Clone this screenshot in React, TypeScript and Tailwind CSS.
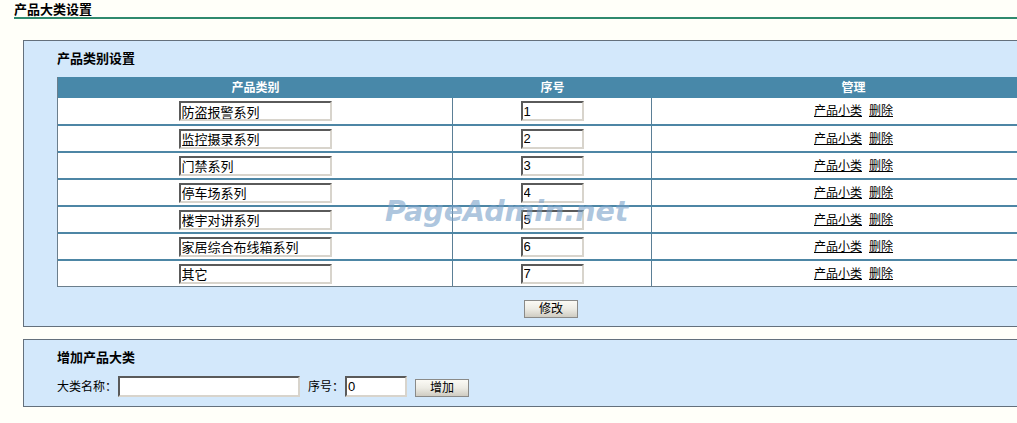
import React from 'react'

// product category rows
const categories = [
  { name: '防盗报警系列', order: '1' },
  { name: '监控摄录系列', order: '2' },
  { name: '门禁系列', order: '3' },
  { name: '停车场系列', order: '4' },
  { name: '楼宇对讲系列', order: '5' },
  { name: '家居综合布线箱系列', order: '6' },
  { name: '其它', order: '7' },
]

const font = { fontFamily: '"Liberation Sans", "Noto Sans CJK SC", sans-serif' }

const insetInput =
  'h-[20px] bg-white border-2 border-t-[#5a5a5a] border-l-[#5a5a5a] border-r-[#d8d4cc] border-b-[#d8d4cc] px-[1px] text-[13px] leading-none text-black outline-none'

const oldButton =
  'h-[18px] w-[54px] border border-[#8a8a88] bg-gradient-to-b from-[#fbfaf5] via-[#ecebe4] to-[#cfccc2] text-[12px] leading-none text-black'

export default function App() {
  return (
    <div className="h-[423px] w-full overflow-hidden bg-[#fffff9] text-black" style={font}>
      <div className="pl-[14px]">
        {/* page title */}
        <div className="h-[19px] border-b-2 border-[#2f8a6e] pt-[3px] text-[13px] font-bold leading-[14px]">
          产品大类设置
        </div>

        {/* category list panel */}
        <div className="mt-[21px] ml-[9px] w-[1070px] border border-[#64707c] bg-[#d3e8fb] pl-[33px]">
          <div className="flex h-[36px] items-center text-[13px] font-bold">产品类别设置</div>

          <div className="relative w-[998px] border-l border-b border-[#6b7e8c] bg-white">
            <div className="flex h-[21px] bg-[#4888a9] text-[12px] font-bold text-white">
              <div className="flex w-[395px] items-center justify-center">产品类别</div>
              <div className="flex w-[199px] items-center justify-center">序号</div>
              <div className="flex flex-1 items-center justify-center">管理</div>
            </div>

            {categories.map((c, i) => (
              <div
                key={c.order}
                className={
                  i === 0
                    ? 'flex h-[26px]'
                    : 'flex h-[27px] border-t-2 border-[#4d86a5]'
                }
              >
                <div className="flex w-[395px] items-center justify-center border-r border-[#5b7f96]">
                  <input className={`${insetInput} w-[153px]`} defaultValue={c.name} />
                </div>
                <div className="flex w-[199px] items-center justify-center border-r border-[#5b7f96]">
                  <input className={`${insetInput} w-[63px]`} defaultValue={c.order} />
                </div>
                <div className="flex flex-1 items-center justify-center gap-[7px] text-[12px]">
                  <a className="underline">产品小类</a>
                  <a className="underline">删除</a>
                </div>
              </div>
            ))}

            {/* site watermark */}
            <div
              className="pointer-events-none absolute left-[327px] top-[114px] text-[28.5px] font-bold italic text-[#78a0c8]/60"
              style={{ fontFamily: '"DejaVu Sans", Verdana, sans-serif' }}
            >
              PageAdmin.net
            </div>
          </div>

          <div className="flex w-[992px] justify-center pt-[13px] pb-[8px] pr-[4px]">
            <button className={oldButton}>修改</button>
          </div>
        </div>

        {/* add category panel */}
        <div className="mt-[12px] ml-[9px] w-[1070px] border border-[#64707c] bg-[#d3e8fb] pl-[33px] pb-[9px]">
          <div className="flex h-[36px] items-center text-[13px] font-bold">增加产品大类</div>
          <div className="flex h-[21px] items-center text-[12px]">
            <span>大类名称：</span>
            <input className={`${insetInput} ml-[1px] h-[21px] w-[182px]`} />
            <span className="ml-[8px]">序号：</span>
            <input className={`${insetInput} ml-[1px] h-[21px] w-[62px]`} defaultValue="0" />
            <button className={`${oldButton} ml-[8px] mt-[2px]`}>增加</button>
          </div>
        </div>
      </div>
    </div>
  )
}
